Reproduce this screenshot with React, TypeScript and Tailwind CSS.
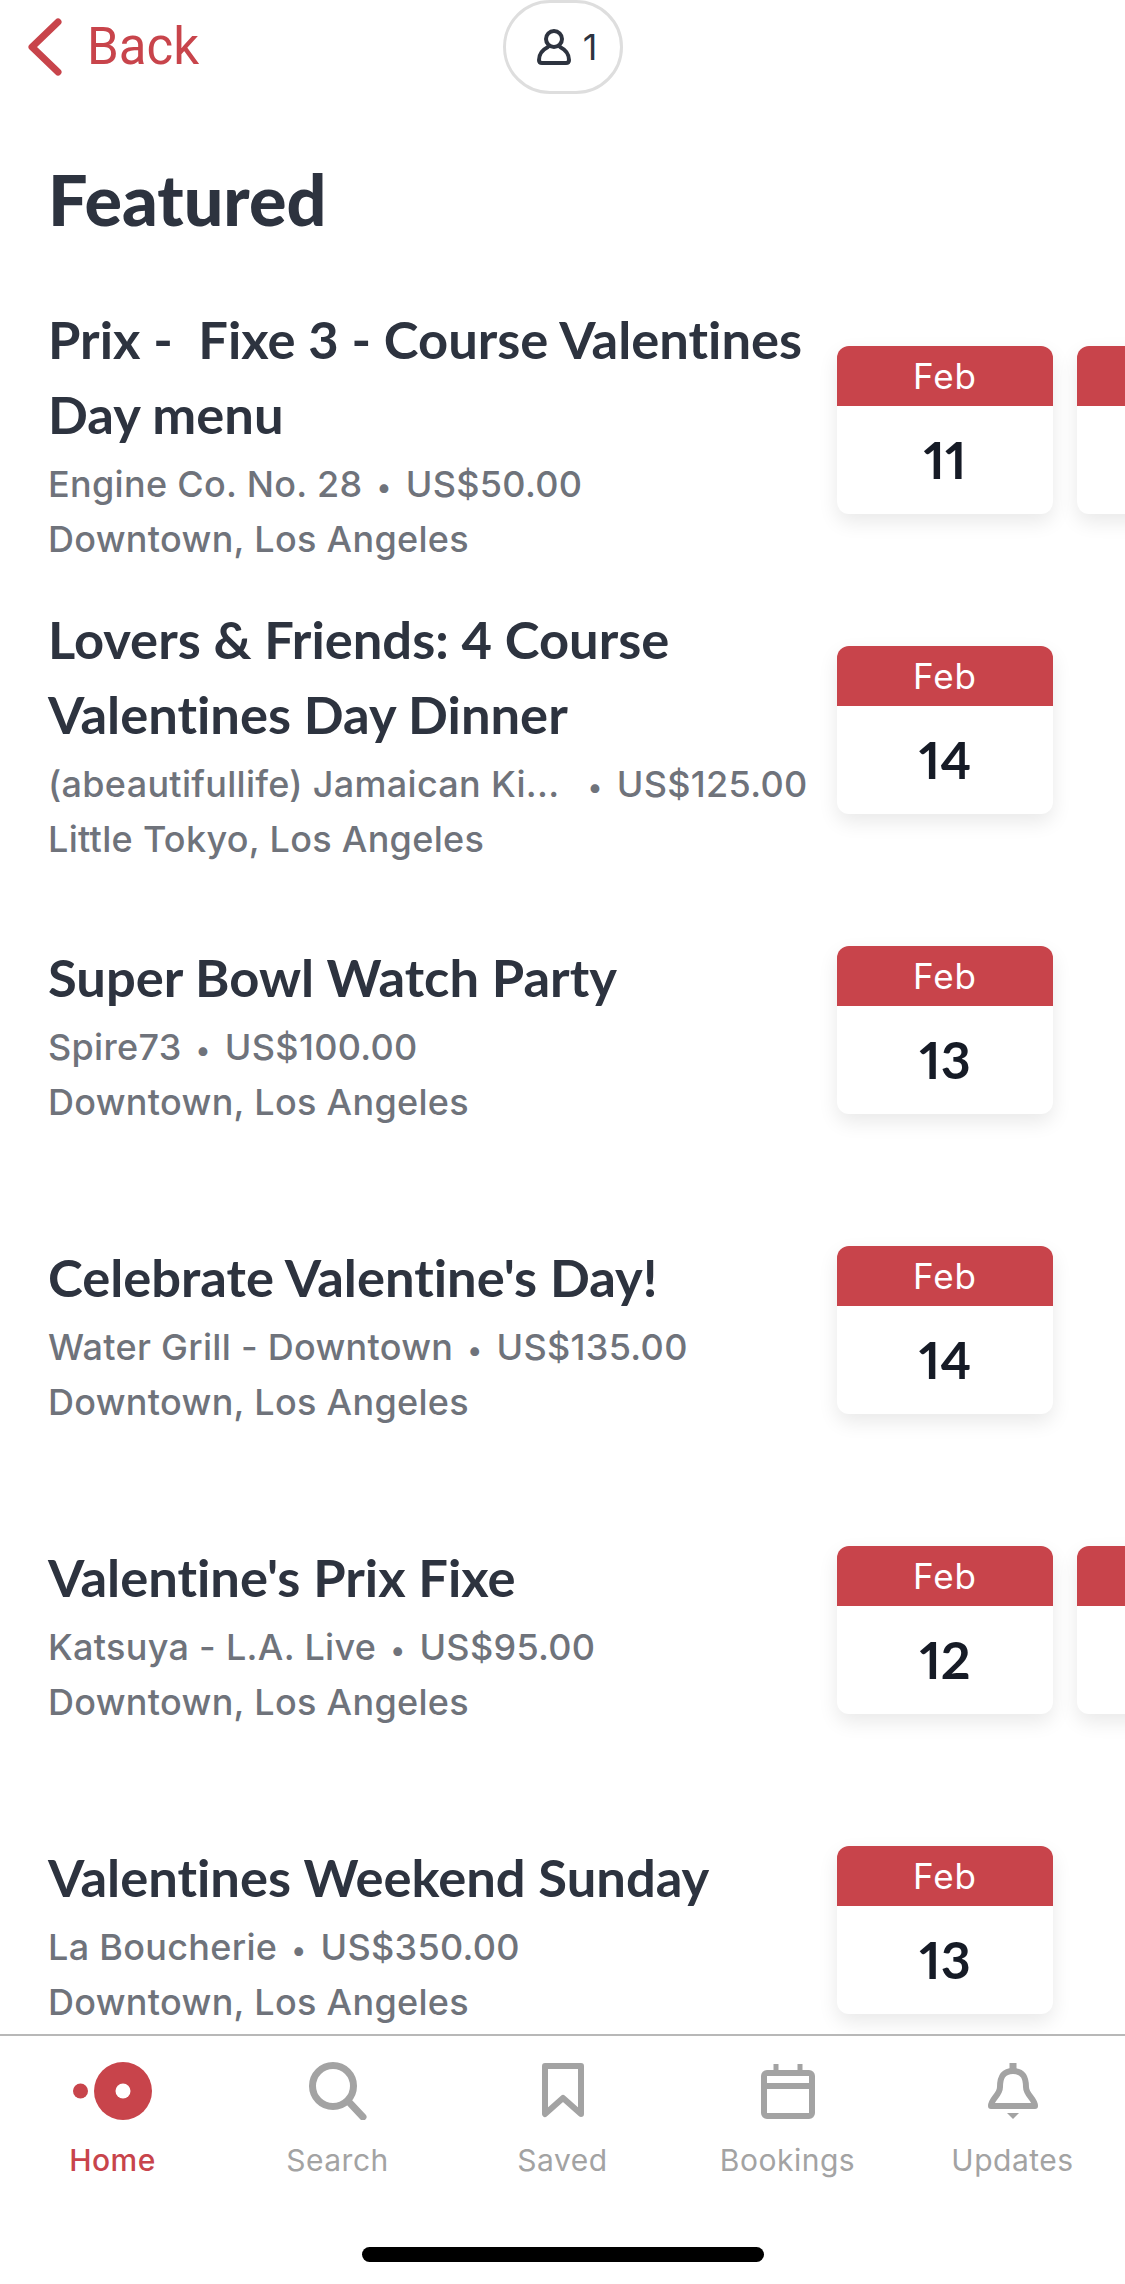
import React from "react";

const events = [
  { title: ["Prix -  Fixe 3 - Course Valentines", "Day menu"], venue: "Engine Co. No. 28", price: "US$50.00", area: "Downtown, Los Angeles", day: 11, more: true },
  { title: ["Lovers & Friends: 4 Course", "Valentines Day Dinner"], venue: "(abeautifullife) Jamaican Ki...", price: "US$125.00", area: "Little Tokyo, Los Angeles", day: 14, wide: true },
  { title: ["Super Bowl Watch Party"], venue: "Spire73", price: "US$100.00", area: "Downtown, Los Angeles", day: 13 },
  { title: ["Celebrate Valentine's Day!"], venue: "Water Grill - Downtown", price: "US$135.00", area: "Downtown, Los Angeles", day: 14 },
  { title: ["Valentine's Prix Fixe"], venue: "Katsuya - L.A. Live", price: "US$95.00", area: "Downtown, Los Angeles", day: 12, more: true },
  { title: ["Valentines Weekend Sunday"], venue: "La Boucherie", price: "US$350.00", area: "Downtown, Los Angeles", day: 13 },
];

function DateCard({ day }: { day?: number }) {
  return (
    <div className="w-[216px] h-[168px] shrink-0 rounded-[12px] overflow-hidden bg-white shadow-[0_8px_20px_rgba(0,0,0,0.09)]">
      <div className="h-[60px] bg-[#c8444b] flex items-center justify-center text-white text-[35px] tracking-[1px] font-['Inter',sans-serif]">
        {day ? "Feb" : ""}
      </div>
      <div className="h-[108px] pb-[2px] flex items-center justify-center text-[#161b26] text-[52px] font-bold [font-variant-numeric:proportional-nums] font-['Lato',sans-serif]">
        {day}
      </div>
    </div>
  );
}

function EventRow({ ev }: { ev: (typeof events)[number] }) {
  return (
    <div className="h-[300px] shrink-0 flex items-center pl-12 overflow-hidden">
      <div className="w-[789px] shrink-0 pt-[8px]">
        <div className="text-[52.5px] leading-[75px] font-bold text-[#2d333f] [font-variant-ligatures:none] font-['Lato',sans-serif] whitespace-pre">
          {ev.title.map((line) => (
            <div key={line}>{line}</div>
          ))}
        </div>
        <div className="mt-[6px] text-[36px] leading-[55px] tracking-[0.3px] font-medium text-[#6f737b] font-['Inter',sans-serif] whitespace-pre">
          <div>
            {ev.venue}
            <span className={ev.wide ? "ml-[28px] mr-[14px] text-[28px] leading-none" : "mx-[14px] text-[28px] leading-none"}>•</span>
            {ev.price}
          </div>
          <div>{ev.area}</div>
        </div>
      </div>
      <div className="flex gap-6">
        <DateCard day={ev.day} />
        {ev.more && <DateCard />}
      </div>
    </div>
  );
}

function Tab({ label, active, children }: { label: string; active?: boolean; children: React.ReactNode }) {
  return (
    <div className="flex flex-col items-center">
      <div className="h-[60px] flex items-center justify-center">{children}</div>
      <div className={`mt-[19px] text-[30px] leading-[40px] tracking-[0.5px] font-['Inter',sans-serif] ${active ? "text-[#c8444b] font-medium" : "text-[#a3a3a3]"}`}>
        {label}
      </div>
    </div>
  );
}

export default function App() {
  return (
    <div className="w-[1125px] h-[2284px] bg-white flex flex-col overflow-hidden">
      {/* Top bar */}
      <div className="h-[94px] shrink-0 grid grid-cols-3 items-center">
        <div className="flex items-center pl-[27px] text-[#c8444b]">
          <svg width="36" height="58" viewBox="0 0 36 58" fill="none" stroke="#c8444b" strokeWidth="7" strokeLinecap="round" strokeLinejoin="round">
            <path d="M31 4 L5 29 L31 54" />
          </svg>
          <span className="ml-[24px] text-[51px] font-['Roboto',sans-serif]">Back</span>
        </div>
        <div className="justify-self-center w-[120px] h-[94px] rounded-[47px] border-[3px] border-[#dedede] flex items-center justify-center gap-[12px] pl-[9px]">
          <svg width="34" height="36" viewBox="0 0 34 36" fill="none" stroke="#2d333f" strokeWidth="4">
            <ellipse cx="17" cy="10" rx="8" ry="8" />
            <path d="M11 18 C5 21 2 26 2 31 Q2 34 5 34 L29 34 Q32 34 32 31 C32 26 29 21 23 18" strokeLinecap="round" />
          </svg>
          <span className="text-[36px] text-[#2d333f] font-['Inter',sans-serif]">1</span>
        </div>
      </div>

      {/* List */}
      <div className="flex-1 min-h-0 overflow-hidden">
        <h1 className="h-[186px] pl-[48px] pt-[61px] text-[70px] leading-[88px] font-black text-[#2d333f] font-['Lato',sans-serif]">
          Featured
        </h1>
        {events.map((ev) => (
          <EventRow key={ev.venue} ev={ev} />
        ))}
      </div>

      {/* Tab bar */}
      <div className="h-[250px] shrink-0 border-t-2 border-[#b8b8b8] relative">
        <div className="grid grid-cols-5 pt-[25px]">
          <Tab label="Home" active>
            <svg width="80" height="58" viewBox="0 0 80 58">
              <circle cx="7.5" cy="29" r="7.5" fill="#c8444b" />
              <circle cx="50" cy="29" r="29" fill="#c8444b" />
              <circle cx="50" cy="29" r="7.5" fill="#fff" />
            </svg>
          </Tab>
          <Tab label="Search">
            <svg width="58" height="58" viewBox="0 0 58 58" fill="none" stroke="#a3a3a3" strokeWidth="7">
              <circle cx="24" cy="24" r="20.5" />
              <path d="M39 39 L54 55" strokeLinecap="round" />
            </svg>
          </Tab>
          <Tab label="Saved">
            <svg width="42" height="56" viewBox="0 0 42 56" fill="none" stroke="#a3a3a3" strokeWidth="6" strokeLinejoin="round">
              <path d="M3 3 H39 V51 L21 35 L3 51 Z" />
            </svg>
          </Tab>
          <Tab label="Bookings">
            <svg width="54" height="56" viewBox="0 0 54 56" fill="none" stroke="#a3a3a3" strokeWidth="6" strokeLinejoin="round">
              <rect x="3" y="10" width="48" height="43" rx="3" />
              <path d="M3 23 H51" />
              <path d="M15 1 V10 M39 1 V10" strokeWidth="5" />
            </svg>
          </Tab>
          <Tab label="Updates">
            <svg width="50" height="56" viewBox="0 0 50 56" fill="none" stroke="#a3a3a3" strokeWidth="6" strokeLinejoin="round">
              <path d="M25 8 C14 8 12 16 12 24 C12 32 3 36 3 43 H47 C47 36 38 32 38 24 C38 16 36 8 25 8 Z" />
              <path d="M25 0 V8" strokeWidth="7" />
              <path d="M19 50 H31 L25 56 Z" fill="#a3a3a3" stroke="none" />
            </svg>
          </Tab>
        </div>
        <div className="absolute left-[362px] top-[211px] w-[402px] h-[15px] rounded-full bg-black" />
      </div>
    </div>
  );
}
